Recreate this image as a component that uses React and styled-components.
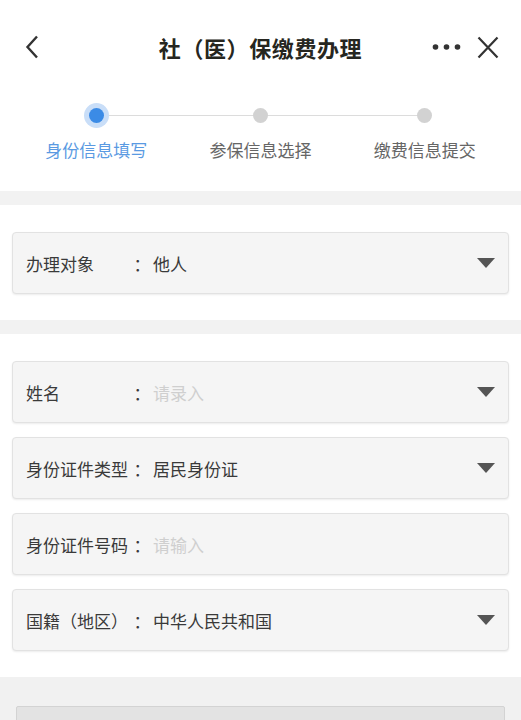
import React from 'react';
import styled, { createGlobalStyle } from 'styled-components';

const GlobalStyle = createGlobalStyle`
  html, body {
    margin: 0;
    padding: 0;
    background: #fff;
    font-family: "Noto Sans CJK SC", "Noto Sans", sans-serif;
  }
  * { box-sizing: border-box; }
`;

const steps = ['身份信息填写', '参保信息选择', '缴费信息提交'];

const fields = [
  { label: '姓名', value: '请录入', placeholder: true, select: true },
  { label: '身份证件类型', value: '居民身份证', select: true },
  { label: '身份证件号码', value: '请输入', placeholder: true },
  { label: '国籍（地区）', value: '中华人民共和国', select: true },
];

const BackIcon = () => (
  <svg width="14" height="24" viewBox="0 0 14 24">
    <path d="M12 1.5 L2.5 12 L12 22.5" fill="none" stroke="#333" strokeWidth="2.4" />
  </svg>
);

const MoreIcon = () => (
  <svg width="29" height="8" viewBox="0 0 29 8">
    <circle cx="3.5" cy="4" r="2.8" fill="#333" />
    <circle cx="14.5" cy="4" r="2.8" fill="#333" />
    <circle cx="25.5" cy="4" r="2.8" fill="#333" />
  </svg>
);

const CloseIcon = () => (
  <svg width="22" height="23" viewBox="0 0 22 23">
    <path d="M1.5 1.5 L20.5 21.5 M20.5 1.5 L1.5 21.5" fill="none" stroke="#333" strokeWidth="2.2" />
  </svg>
);

const Caret = () => (
  <svg width="18" height="10" viewBox="0 0 18 10">
    <path d="M0 0 H18 L9 10 Z" fill="#555" />
  </svg>
);

const FieldRow = ({ label, value, placeholder, select }) => (
  <Card>
    <Label>{label}</Label>
    <Colon>：</Colon>
    <Value $placeholder={placeholder}>{value}</Value>
    {select && <Caret />}
  </Card>
);

export default function App() {
  return (
    <Page>
      <GlobalStyle />
      <Header>
        <BackIcon />
        <Title>社（医）保缴费办理</Title>
        <Actions>
          <MoreIcon />
          <CloseIcon />
        </Actions>
      </Header>

      <Stepper>
        {steps.map((s, i) => (
          <Step key={s} $first={i === 0} $last={i === steps.length - 1}>
            <Dot $active={i === 0} />
            <StepLabel $active={i === 0}>{s}</StepLabel>
          </Step>
        ))}
      </Stepper>

      <Divider />
      <Section>
        <FieldRow label="办理对象" value="他人" select />
      </Section>
      <Divider />
      <Section>
        {fields.map((f) => (
          <FieldRow key={f.label} {...f} />
        ))}
      </Section>

      <Footer>
        <FooterButton />
      </Footer>
    </Page>
  );
}

const Page = styled.div`
  width: 521px;
  min-height: 720px;
  background: #fff;
  overflow: hidden;
`;

const Header = styled.div`
  height: 94px;
  display: flex;
  align-items: center;
  justify-content: space-between;
  padding: 0 22px 0 25px;
  position: relative;
`;

const Title = styled.h1`
  position: absolute;
  left: 0;
  right: 0;
  text-align: center;
  margin: 0;
  font-size: 22px;
  font-weight: 700;
  color: #262620;
  letter-spacing: 0.6px;
  pointer-events: none;
`;

const Actions = styled.div`
  display: flex;
  align-items: center;
  gap: 16px;
`;

const Stepper = styled.div`
  display: grid;
  grid-template-columns: repeat(3, 1fr);
  padding: 14px 14px 0;
  height: 97px;
`;

const Step = styled.div`
  display: flex;
  flex-direction: column;
  align-items: center;
  position: relative;

  &::before, &::after {
    content: '';
    position: absolute;
    top: 7px;
    height: 1px;
    background: #dcdcdc;
    width: 50%;
  }
  &::before {
    left: 0;
    display: ${(p) => (p.$first ? 'none' : 'block')};
  }
  &::after {
    right: 0;
    display: ${(p) => (p.$last ? 'none' : 'block')};
  }
`;

const Dot = styled.div`
  width: 15px;
  height: 15px;
  border-radius: 50%;
  background: ${(p) => (p.$active ? '#3b8be6' : '#d2d2d2')};
  box-shadow: ${(p) => (p.$active ? '0 0 0 5px #c9def8' : 'none')};
  position: relative;
  z-index: 1;
`;

const StepLabel = styled.div`
  margin-top: 16px;
  font-size: 17px;
  line-height: 22px;
  color: ${(p) => (p.$active ? '#5a9ae2' : '#666')};
`;

const Divider = styled.div`
  height: 14px;
  background: #f2f2f2;
`;

const Section = styled.div`
  display: flex;
  flex-direction: column;
  gap: 14px;
  padding: 27px 12px 26px;
`;

const Card = styled.div`
  height: 62px;
  display: flex;
  align-items: center;
  padding: 0 13px 0 13px;
  background: #f5f5f5;
  border: 1px solid #e2e2e2;
  border-radius: 4px;
  box-shadow: 0 1px 2px rgba(0, 0, 0, 0.08);
`;

const Label = styled.span`
  width: 106px;
  font-size: 17px;
  color: #3a3a3a;
  white-space: nowrap;
`;

const Colon = styled.span`
  width: 20px;
  text-align: center;
  font-size: 17px;
  color: #3a3a3a;
`;

const Value = styled.span`
  flex: 1;
  margin-left: 1px;
  font-size: 17px;
  color: ${(p) => (p.$placeholder ? '#cfcfcf' : '#3a3a3a')};
`;

const Footer = styled.div`
  background: #f1f1f1;
  padding: 29px 16px 0;
  height: 60px;
`;

const FooterButton = styled.div`
  height: 50px;
  background: #e3e3e3;
  border: 1px solid #d3d3d3;
  border-radius: 2px;
`;
